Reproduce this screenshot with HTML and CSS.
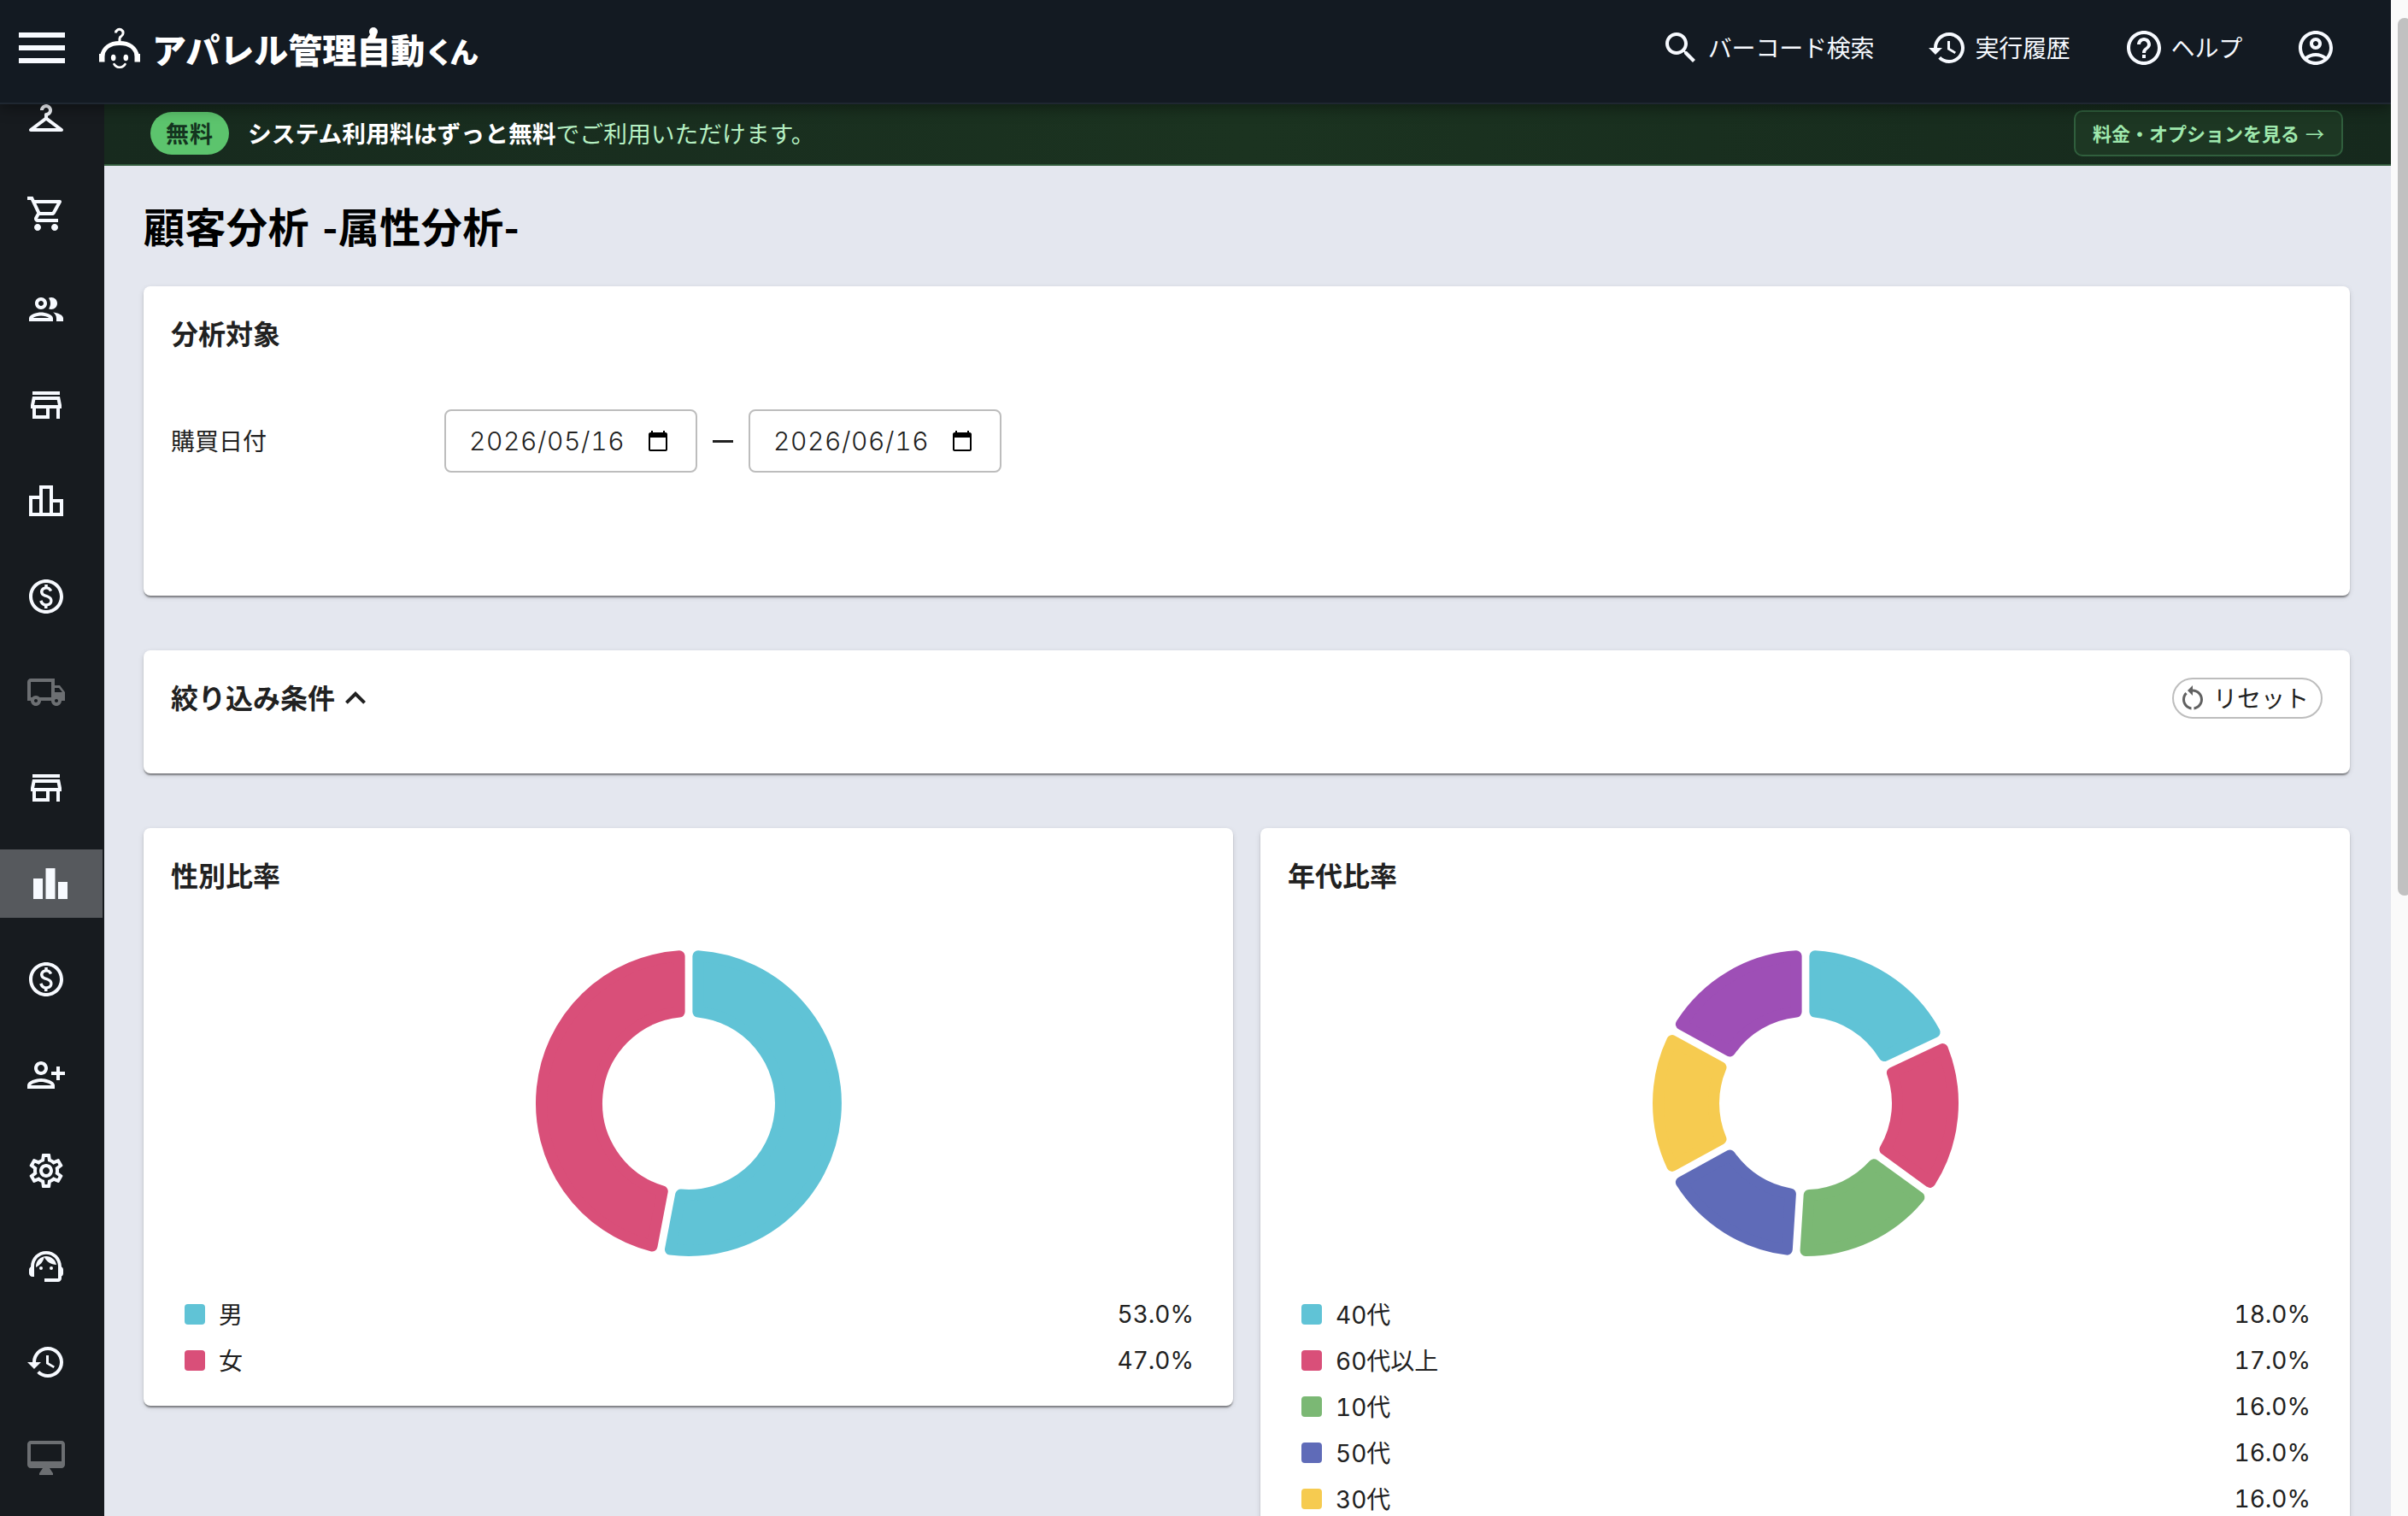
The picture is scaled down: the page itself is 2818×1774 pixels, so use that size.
FILE: index.html
```html
<!DOCTYPE html>
<html lang="ja">

<head>
    <meta charset="UTF-8">
    <title>顧客分析 -属性分析-</title>
    <link rel="stylesheet" href="styles.css">
</head>

<body>
    <div class="app">
        <!-- Header -->
        <header class="header">
            <svg class="menu-icon" viewBox="0 0 24 24"><path d="M3 18h18v-2H3v2zm0-5h18v-2H3v2zm0-7v2h18V6H3z"/></svg>
            <div class="logo">
                <svg class="logo-mark" viewBox="0 0 48 48">
                    <path d="M19.5 6.5a4.3 4.3 0 1 1 6.5 3.8c-1.6.8-2 1.5-2 3V18" fill="none" stroke="#fff" stroke-width="3"/>
                    <path d="M3.5 40v-6C5 24 13 18.5 24 18.5S43 24 44.5 34v6" fill="none" stroke="#fff" stroke-width="5"/>
                    <path d="M0 31h6.5v9.5H0zM41.5 31H48v9.5h-6.5z"/>
                    <ellipse cx="16.7" cy="35.5" rx="2.8" ry="3.8"/>
                    <ellipse cx="31.3" cy="35.5" rx="2.8" ry="3.8"/>
                    <path d="M17.5 43c3 5 10 5 13 0" fill="none" stroke="#fff" stroke-width="2.6" stroke-linecap="round"/>
                </svg>
                <span class="logo-text">アパレル管理自動<span class="logo-small">くん</span></span>
                <svg class="logo-antenna" viewBox="0 0 20 20"><circle cx="13" cy="6" r="5"/><path d="M10 8l4 3-4 7H3z"/></svg>
            </div>
            <nav class="header-nav">
                <a class="header-link">
                    <svg class="icon" viewBox="0 0 24 24"><path d="M15.5 14h-.79l-.28-.27C15.41 12.59 16 11.11 16 9.5 16 5.91 13.09 3 9.5 3S3 5.91 3 9.5 5.91 16 9.5 16c1.61 0 3.09-.59 4.23-1.57l.27.28v.79l5 4.99L20.49 19l-4.99-5zm-6 0C7.01 14 5 11.99 5 9.5S7.01 5 9.5 5 14 7.01 14 9.5 11.99 14 9.5 14z"/></svg>
                    <span>バーコード検索</span>
                </a>
                <a class="header-link">
                    <svg class="icon" viewBox="0 0 24 24"><use href="#i-history"/></svg>
                    <span>実行履歴</span>
                </a>
                <a class="header-link">
                    <svg class="icon" viewBox="0 0 24 24"><path d="M11 18h2v-2h-2v2zm1-16C6.48 2 2 6.48 2 12s4.48 10 10 10 10-4.48 10-10S17.52 2 12 2zm0 18c-4.41 0-8-3.59-8-8s3.59-8 8-8 8 3.59 8 8-3.59 8-8 8zm0-14c-2.21 0-4 1.79-4 4h2c0-1.1.9-2 2-2s2 .9 2 2c0 2-3 1.75-3 5h2c0-2.25 3-2.5 3-5 0-2.21-1.79-4-4-4z"/></svg>
                    <span>ヘルプ</span>
                </a>
                <a class="header-link">
                    <svg class="icon" viewBox="0 0 24 24"><path d="M12 2C6.48 2 2 6.48 2 12s4.48 10 10 10 10-4.48 10-10S17.52 2 12 2zM7.35 18.5C8.66 17.56 10.26 17 12 17s3.34.56 4.65 1.5C15.34 19.44 13.74 20 12 20s-3.34-.56-4.65-1.5zm10.79-1.38C16.45 15.8 14.32 15 12 15s-4.45.8-6.14 2.12C4.7 15.73 4 13.95 4 12c0-4.42 3.58-8 8-8s8 3.58 8 8c0 1.95-.7 3.73-1.86 5.12zM12 6c-1.93 0-3.5 1.57-3.5 3.5S10.07 13 12 13s3.5-1.57 3.5-3.5S13.93 6 12 6zm0 5c-.83 0-1.5-.67-1.5-1.5S11.17 8 12 8s1.5.67 1.5 1.5S12.83 11 12 11z"/></svg>
                </a>
            </nav>
        </header>

        <div class="body">
            <!-- Sidebar -->
            <aside class="sidebar">
                <div class="side-list">
                    <a class="side-item"><svg class="icon" viewBox="0 0 24 24"><path d="M21.6 18.2L13 11.75v-.91c1.65-.49 2.8-2.17 2.43-4.05-.26-1.31-1.3-2.4-2.61-2.7C10.54 3.57 8.5 5.3 8.5 7.5h2c0-.83.67-1.5 1.5-1.5s1.5.67 1.5 1.5c0 .84-.69 1.52-1.53 1.5-.54-.01-.97.45-.97.99v1.76L2.4 18.2c-.77.58-.36 1.8.6 1.8h18c.96 0 1.37-1.22.6-1.8zM6 18l6-4.5 6 4.5H6z"/></svg></a>
                    <a class="side-item"><svg class="icon" viewBox="0 0 24 24"><path d="M15.55 13c.75 0 1.41-.41 1.75-1.03l3.58-6.49c.37-.66-.11-1.48-.87-1.48H5.21l-.94-2H1v2h2l3.6 7.59-1.35 2.44C4.52 15.37 5.48 17 7 17h12v-2H7l1.1-2h7.45zM6.16 6h12.15l-2.76 5H8.53L6.16 6zM7 18c-1.1 0-1.99.9-1.99 2S5.9 22 7 22s2-.9 2-2-.9-2-2-2zm10 0c-1.1 0-1.99.9-1.99 2s.89 2 1.99 2 2-.9 2-2-.9-2-2-2z"/></svg></a>
                    <a class="side-item"><svg class="icon" viewBox="0 0 24 24"><path d="M9 13.75c-2.34 0-7 1.17-7 3.5V19h14v-1.75c0-2.33-4.66-3.5-7-3.5zM4.34 17c.84-.58 2.87-1.25 4.66-1.25s3.82.67 4.66 1.25H4.34zM9 12c1.93 0 3.5-1.57 3.5-3.5S10.93 5 9 5 5.5 6.57 5.5 8.5 7.07 12 9 12zm0-5c.83 0 1.5.67 1.5 1.5S9.83 10 9 10s-1.5-.67-1.5-1.5S8.17 7 9 7zm7.04 6.81c1.16.84 1.96 1.96 1.96 3.44V19h4v-1.75c0-2.02-3.5-3.17-5.96-3.44zM15 12c1.93 0 3.5-1.57 3.5-3.5S16.93 5 15 5c-.54 0-1.04.13-1.5.35.63.89 1 1.98 1 3.15s-.37 2.26-1 3.15c.46.22.96.35 1.5.35z"/></svg></a>
                    <a class="side-item"><svg class="icon" viewBox="0 0 24 24"><use href="#i-store"/></svg></a>
                    <a class="side-item"><svg class="icon" viewBox="0 0 24 24"><path d="M16 11V3H8v6H2v12h20V11h-6zm-6-6h4v14h-4V5zm-6 6h4v8H4v-8zm16 8h-4v-6h4v6z"/></svg></a>
                    <a class="side-item"><svg class="icon" viewBox="0 0 24 24"><use href="#i-paid"/></svg></a>
                    <a class="side-item disabled"><svg class="icon" viewBox="0 0 24 24"><path d="M20 8h-3V4H3c-1.1 0-2 .9-2 2v11h2c0 1.66 1.34 3 3 3s3-1.34 3-3h6c0 1.66 1.34 3 3 3s3-1.34 3-3h2v-5l-3-4zm-.5 1.5l1.96 2.5H17V9.5h2.5zM6 18c-.55 0-1-.45-1-1s.45-1 1-1 1 .45 1 1-.45 1-1 1zm2.22-3c-.55-.61-1.33-1-2.22-1s-1.67.39-2.22 1H3V6h12v9H8.22zM18 18c-.55 0-1-.45-1-1s.45-1 1-1 1 .45 1 1-.45 1-1 1z"/></svg></a>
                    <a class="side-item"><svg class="icon" viewBox="0 0 24 24"><use href="#i-store"/></svg></a>
                    <a class="side-item active"><svg class="icon" viewBox="0 0 24 24"><path d="M7.5 21H2V9h5.5v12zm7.25-18h-5.5v18h5.5V3zM22 11h-5.5v10H22V11z"/></svg></a>
                    <a class="side-item"><svg class="icon" viewBox="0 0 24 24"><use href="#i-paid"/></svg></a>
                    <a class="side-item"><svg class="icon" viewBox="0 0 24 24"><path d="M13 8c0-2.21-1.79-4-4-4S5 5.79 5 8s1.79 4 4 4 4-1.79 4-4zm-2 0c0 1.1-.9 2-2 2s-2-.9-2-2 .9-2 2-2 2 .9 2 2zM1 18v2h16v-2c0-2.66-5.33-4-8-4s-8 1.34-8 4zm2 0c.2-.71 3.3-2 6-2 2.69 0 5.78 1.28 6 2H3zM20 15v-3h3v-2h-3V7h-2v3h-3v2h3v3h2z"/></svg></a>
                    <a class="side-item"><svg class="icon" viewBox="0 0 24 24"><path d="M19.43 12.98c.04-.32.07-.64.07-.98 0-.34-.03-.66-.07-.98l2.11-1.65c.19-.15.24-.42.12-.64l-2-3.46c-.09-.16-.26-.25-.44-.25-.06 0-.12.01-.17.03l-2.49 1c-.52-.4-1.08-.73-1.69-.98l-.38-2.65C14.46 2.18 14.25 2 14 2h-4c-.25 0-.46.18-.49.42l-.38 2.65c-.61.25-1.17.59-1.69.98l-2.49-1c-.06-.02-.12-.03-.18-.03-.17 0-.34.09-.43.25l-2 3.46c-.13.22-.07.49.12.64l2.11 1.65c-.04.32-.07.65-.07.98 0 .33.03.66.07.98l-2.11 1.65c-.19.15-.24.42-.12.64l2 3.46c.09.16.26.25.44.25.06 0 .12-.01.17-.03l2.49-1c.52.4 1.08.73 1.69.98l.38 2.65c.03.24.24.42.49.42h4c.25 0 .46-.18.49-.42l.38-2.65c.61-.25 1.17-.59 1.69-.98l2.49 1c.06.02.12.03.18.03.17 0 .34-.09.43-.25l2-3.46c.12-.22.07-.49-.12-.64l-2.11-1.65zm-1.98-1.71c.04.31.05.52.05.73 0 .21-.02.43-.05.73l-.14 1.13.89.7 1.08.84-.7 1.21-1.27-.51-1.04-.42-.9.68c-.43.32-.84.56-1.25.73l-1.06.43-.16 1.13-.2 1.35h-1.4l-.19-1.35-.16-1.13-1.06-.43c-.43-.18-.83-.41-1.23-.71l-.91-.7-1.06.43-1.27.51-.7-1.21 1.08-.84.89-.7-.14-1.13c-.03-.31-.05-.54-.05-.74s.02-.43.05-.73l.14-1.13-.89-.7-1.08-.84.7-1.21 1.27.51 1.04.42.9-.68c.43-.32.84-.56 1.25-.73l1.06-.43.16-1.13.2-1.35h1.39l.19 1.35.16 1.13 1.06.43c.43.18.83.41 1.23.71l.91.7 1.06-.43 1.27-.51.7 1.21-1.07.85-.89.7.14 1.13zM12 8c-2.21 0-4 1.79-4 4s1.79 4 4 4 4-1.79 4-4-1.79-4-4-4zm0 6c-1.1 0-2-.9-2-2s.9-2 2-2 2 .9 2 2-.9 2-2 2z"/></svg></a>
                    <a class="side-item"><svg class="icon" viewBox="0 0 24 24"><path d="M21 12.22C21 6.73 16.74 3 12 3c-4.69 0-9 3.65-9 9.28-.6.34-1 .98-1 1.72v2c0 1.1.9 2 2 2h1v-6.1c0-3.87 3.13-7 7-7s7 3.13 7 7V19h-8v2h8c1.1 0 2-.9 2-2v-1.22c.59-.31 1-.92 1-1.64v-2.3c0-.7-.41-1.31-1-1.62z"/><circle cx="9" cy="13" r="1"/><circle cx="15" cy="13" r="1"/><path d="M18 11.03C17.52 8.18 15.04 6 12.05 6c-3.03 0-6.29 2.51-6.03 6.45 2.47-1.01 4.33-3.21 4.86-5.89 1.31 2.63 4 4.44 7.12 4.47z"/></svg></a>
                    <a class="side-item"><svg class="icon" viewBox="0 0 24 24"><use href="#i-history"/></svg></a>
                    <a class="side-item disabled"><svg class="icon" viewBox="0 0 24 24"><path d="M21 2H3c-1.1 0-2 .9-2 2v12c0 1.1.9 2 2 2h7l-2 3v1h8v-1l-2-3h7c1.1 0 2-.9 2-2V4c0-1.1-.9-2-2-2zm0 12H3V4h18v10z"/></svg></a>
                </div>
            </aside>

            <!-- Main -->
            <main class="main">
                <div class="banner">
                    <span class="banner-badge">無料</span>
                    <p class="banner-text"><strong>システム利用料はずっと無料</strong>でご利用いただけます。</p>
                    <a class="banner-link">料金・オプションを見る <span class="arrow">→</span></a>
                </div>

                <div class="content">
                    <h1>顧客分析 -属性分析-</h1>

                    <section class="card target-card">
                        <h2>分析対象</h2>
                        <div class="date-row">
                            <span class="date-label">購買日付</span>
                            <div class="date-field">
                                <span>2026/05/16</span>
                                <svg class="calendar" viewBox="0 0 24 26"><use href="#i-calendar"/></svg>
                            </div>
                            <span class="date-dash"></span>
                            <div class="date-field">
                                <span>2026/06/16</span>
                                <svg class="calendar" viewBox="0 0 24 26"><use href="#i-calendar"/></svg>
                            </div>
                        </div>
                    </section>

                    <section class="card filter-card">
                        <h2>絞り込み条件<svg class="chevron" viewBox="0 0 24 24"><path d="M7.41 15.41L12 10.83l4.59 4.58L18 14l-6-6-6 6z"/></svg></h2>
                        <button class="reset-btn">
                            <svg class="reset-icon" viewBox="0 0 24 24"><path d="M12 5V2L8 6l4 4V7c3.31 0 6 2.69 6 6 0 2.97-2.17 5.43-5 5.91v2.02c3.95-.49 7-3.85 7-7.93 0-4.42-3.58-8-8-8zm-6 8c0-1.65.67-3.15 1.76-4.24L6.34 7.34C4.9 8.79 4 10.79 4 13c0 4.08 3.05 7.44 7 7.93v-2.02c-2.83-.48-5-2.94-5-5.91z"/></svg>
                            <span>リセット</span>
                        </button>
                    </section>

                    <div class="charts">
                        <section class="card chart-card">
                            <h2>性別比率</h2>
                            <svg class="donut" id="gender-chart" viewBox="-180 -180 360 360"></svg>
                            <ul class="legend">
                                <li><span class="swatch cyan"></span><span class="name">男</span><span class="value">53.0%</span></li>
                                <li><span class="swatch pink"></span><span class="name">女</span><span class="value">47.0%</span></li>
                            </ul>
                        </section>
                        <section class="card chart-card">
                            <h2>年代比率</h2>
                            <svg class="donut" id="age-chart" viewBox="-180 -180 360 360"></svg>
                            <ul class="legend">
                                <li><span class="swatch cyan"></span><span class="name">40代</span><span class="value">18.0%</span></li>
                                <li><span class="swatch pink"></span><span class="name">60代以上</span><span class="value">17.0%</span></li>
                                <li><span class="swatch green"></span><span class="name">10代</span><span class="value">16.0%</span></li>
                                <li><span class="swatch blue"></span><span class="name">50代</span><span class="value">16.0%</span></li>
                                <li><span class="swatch yellow"></span><span class="name">30代</span><span class="value">16.0%</span></li>
                            </ul>
                        </section>
                    </div>
                </div>
            </main>
        </div>

        <div class="scrollbar"><div class="scrollbar-thumb"></div></div>
    </div>

    <!-- Shared icons -->
    <svg class="defs">
        <defs>
            <path id="i-history" d="M13 3c-4.97 0-9 4.03-9 9H1l3.89 3.89.07.14L9 12H6c0-3.87 3.13-7 7-7s7 3.13 7 7-3.13 7-7 7c-1.93 0-3.68-.79-4.94-2.06l-1.42 1.42C8.27 19.99 10.51 21 13 21c4.97 0 9-4.03 9-9s-4.03-9-9-9zm-1 5v5l4.28 2.54.72-1.21-3.5-2.08V8H12z"/>
            <path id="i-store" d="M18.36 9l.6 3H5.04l.6-3h12.72M20 4H4v2h16V4zm0 3H4l-1 5v2h1v6h10v-6h4v6h2v-6h1v-2l-1-5zM6 18v-4h6v4H6z"/>
            <path id="i-paid" d="M12 2C6.48 2 2 6.48 2 12s4.48 10 10 10 10-4.48 10-10S17.52 2 12 2zm0 18c-4.41 0-8-3.59-8-8s3.59-8 8-8 8 3.59 8 8-3.59 8-8 8zm.89-8.9c-1.78-.59-2.64-.96-2.64-1.9 0-1.02 1.11-1.39 1.81-1.39 1.31 0 1.79.99 1.9 1.34l1.58-.67c-.15-.44-.82-1.91-2.66-2.23V5h-1.75v1.26c-2.6.56-2.62 2.85-2.62 2.96 0 2.27 2.25 2.91 3.35 3.31 1.58.56 2.28 1.07 2.28 2.03 0 1.13-1.05 1.61-1.98 1.61-1.82 0-2.34-1.87-2.4-2.09l-1.66.67c.63 2.19 2.28 2.78 2.9 2.96V19h1.75v-1.24c.52-.09 3.02-.59 3.02-3.22.01-1.39-.6-2.61-3.02-3.44z"/>
            <path id="i-calendar" d="M4 1h2v2h12V1h2v2h1c1 0 2 1 2 2v18c0 1-1 2-2 2H3c-1 0-2-1-2-2V5c0-1 1-2 2-2h1V1zM3 9v14h18V9H3z" fill-rule="evenodd"/>
        </defs>
    </svg>

    <script>
        const genderData = [
            { value: 53, color: '#60c3d6' },
            { value: 47, color: '#d94f79' }
        ];
        const ageData = [
            { value: 18, color: '#60c3d6' },
            { value: 17, color: '#d94f79' },
            { value: 16, color: '#7bb874' },
            { value: 16, color: '#5f6bb8' },
            { value: 16, color: '#f6cb50' },
            { value: 17, color: '#9e4fb6' }
        ];

        // The path is inset by the corner radius, the round stroke fills it back out
        function drawDonut(id, data) {
            const corner = 6.5;
            const outer = 179 - corner;
            const inner = 101 + corner;
            const offset = 4.4 + corner;
            const point = (r, a) => `${(r * Math.sin(a)).toFixed(2)} ${(-r * Math.cos(a)).toFixed(2)}`;
            let start = 0;
            let html = '';
            for (const item of data) {
                const end = start + item.value / 100 * Math.PI * 2;
                const o = Math.asin(offset / outer);
                const i = Math.asin(offset / inner);
                const largeOuter = end - start - 2 * o > Math.PI ? 1 : 0;
                const largeInner = end - start - 2 * i > Math.PI ? 1 : 0;
                html += `<path fill="${item.color}" stroke="${item.color}" stroke-width="${corner * 2}" stroke-linejoin="round" d="M${point(outer, start + o)} A${outer} ${outer} 0 ${largeOuter} 1 ${point(outer, end - o)} L${point(inner, end - i)} A${inner} ${inner} 0 ${largeInner} 0 ${point(inner, start + i)} Z"/>`;
                start = end;
            }
            document.getElementById(id).innerHTML = html;
        }

        drawDonut('gender-chart', genderData);
        drawDonut('age-chart', ageData);
    </script>
</body>

</html>
```
FILE: styles.css
```css
* {
    box-sizing: border-box;
}

body {
    margin: 0;
    font-family: 'Noto Sans CJK JP', sans-serif;
    font-size: 28px;
    color: #212121;
    background: #fafafa;
}

h1,
h2,
p,
ul {
    margin: 0;
    padding: 0;
}

.app {
    position: relative;
    width: 100%;
    height: 1774px;
    padding-right: 20px;
    overflow: hidden;
}

.defs {
    display: none;
}

.icon {
    width: 48px;
    height: 48px;
    fill: currentColor;
    flex-shrink: 0;
}

/* Header */
.header {
    position: relative;
    z-index: 2;
    display: flex;
    align-items: center;
    height: 122px;
    padding: 0 64px 8px 13px;
    background: #131a22;
    border-bottom: 2px solid #1f2731;
    color: #f7faff;
    box-shadow: 0 4px 16px rgba(0, 0, 0, 0.4);
}

.menu-icon {
    width: 72px;
    height: 72px;
    fill: #f7faff;
}

.logo {
    position: relative;
    display: flex;
    align-items: center;
    gap: 14px;
    margin-left: 31px;
    fill: #fff;
}

.logo-mark {
    width: 48px;
    height: 48px;
}

.logo-text {
    font-size: 40px;
    font-weight: 900;
    line-height: 48px;
    color: #fff;
    padding-top: 4px;
}

.logo-small {
    font-size: 34px;
    letter-spacing: -5px;
}

.logo-antenna {
    position: absolute;
    left: 308px;
    top: 2px;
    width: 20px;
    height: 20px;
}

.header-nav {
    display: flex;
    gap: 62px;
    margin-left: auto;
}

.header-link {
    display: flex;
    align-items: center;
    gap: 8px;
}

.header-link span {
    padding-bottom: 2px;
    line-height: 46px;
    letter-spacing: -0.2px;
}

.body {
    display: flex;
    height: 1652px;
}

/* Sidebar */
.sidebar {
    width: 122px;
    overflow: hidden;
    background: #171b1f;
    flex-shrink: 0;
}

.side-list {
    display: flex;
    flex-direction: column;
    gap: 32px;
    margin-top: -24px;
}

.side-item {
    display: flex;
    align-items: center;
    width: 120px;
    height: 80px;
    padding-left: 30px;
    color: #f7faff;
}

.side-item.active {
    padding-left: 35px;
    background: #56595d;
}

.side-item.disabled {
    color: #6c6f72;
}

/* Main */
.main {
    flex: 1;
    background: #e4e7ef;
}

.banner {
    display: flex;
    align-items: center;
    height: 72px;
    padding: 0 56px 2px 54px;
    background: linear-gradient(90deg, #172a1e, #1b3320 50%, #16291d);
    border-bottom: 2px solid #315b3b;
}

.banner-badge {
    width: 92px;
    height: 50px;
    border-radius: 25px;
    background: #5cc46d;
    color: #14351f;
    font-size: 27px;
    font-weight: 700;
    letter-spacing: 1px;
    line-height: 49px;
    text-align: center;
}

.banner-text {
    margin-left: 22px;
    padding-bottom: 2px;
    font-size: 27.8px;
    line-height: 48px;
    color: #b5efc2;
}

.banner-text strong {
    color: #fff;
}

.banner-link {
    display: flex;
    justify-content: space-between;
    width: 315px;
    height: 54px;
    margin-left: auto;
    padding: 0 20px;
    border: 2px solid #305f3d;
    border-radius: 10px;
    background: #1d3723;
    color: #9fe8ad;
    font-size: 22px;
    font-weight: 700;
    line-height: 48px;
}

.arrow {
    font-weight: 400;
}

.content {
    padding: 36px 48px 0 46px;
}

h1 {
    margin-bottom: 39px;
    font-size: 48px;
    line-height: 66px;
    letter-spacing: 0.5px;
    word-spacing: 4px;
    color: #000;
}

h2 {
    display: flex;
    align-items: center;
    height: 48px;
    padding-bottom: 3px;
    font-size: 32px;
    line-height: 45px;
}

.card {
    padding: 32px;
    border-radius: 8px;
    background: #fff;
    box-shadow: 0 3px 2px -1px rgba(0, 0, 0, 0.32), 0 2px 2px rgba(0, 0, 0, 0.14), 0 2px 6px rgba(0, 0, 0, 0.12);
}

.target-card {
    height: 362px;
    margin-bottom: 64px;
}

.date-row {
    display: flex;
    align-items: center;
    margin-top: 64px;
}

.date-label {
    width: 320px;
    padding-bottom: 2px;
}

.date-field {
    display: flex;
    align-items: center;
    justify-content: space-between;
    width: 296px;
    height: 74px;
    padding: 0 32px 0 27px;
    border: 2px solid #bdbdbd;
    border-radius: 8px;
    font-family: 'Inter', sans-serif;
    font-size: 30px;
    font-weight: 300;
    font-variant-numeric: tabular-nums;
    letter-spacing: 0.6px;
}

.calendar {
    width: 24px;
    height: 26px;
    fill: #000;
}

.date-dash {
    width: 24px;
    height: 3px;
    margin: 0 18px;
    background: #212121;
}

.filter-card {
    display: flex;
    align-items: flex-start;
    justify-content: space-between;
    height: 144px;
    margin-bottom: 64px;
}

.chevron {
    width: 48px;
    height: 48px;
    margin-top: 2px;
    fill: #212121;
}

.reset-btn {
    display: flex;
    align-items: center;
    gap: 6px;
    width: 176px;
    height: 48px;
    padding: 0 0 0 4px;
    border: 2px solid #bdbdbd;
    border-radius: 24px;
    background: #fff;
    color: #212121;
    font-family: inherit;
    font-size: 28px;
}

.reset-btn span {
    padding-bottom: 2px;
    line-height: 42px;
}

.reset-icon {
    width: 36px;
    height: 36px;
    fill: #616161;
}

/* Charts */
.charts {
    display: grid;
    grid-template-columns: 1fr 1fr;
    gap: 32px;
    align-items: start;
}

.chart-card {
    padding-bottom: 26px;
}

.donut {
    display: block;
    width: 360px;
    height: 360px;
    margin: 62px auto 40px;
}

.legend {
    padding: 0 14px 0 16px;
    list-style: none;
    font-family: 'Inter', 'Noto Sans CJK JP', sans-serif;
    font-size: 28px;
    font-variant-numeric: tabular-nums;
}

.legend li {
    display: flex;
    align-items: center;
    height: 54px;
}

.swatch {
    width: 24px;
    height: 24px;
    margin-right: 16px;
    border-radius: 4px;
}

.name {
    padding-bottom: 2px;
}

.value {
    margin-left: auto;
}

.cyan {
    background: #60c3d6;
}

.pink {
    background: #d94f79;
}

.green {
    background: #7bb874;
}

.blue {
    background: #5f6bb8;
}

.yellow {
    background: #f6cb50;
}

/* Window scrollbar, lies over the right edge */
.scrollbar {
    position: absolute;
    top: 0;
    right: 0;
    width: 20px;
    height: 100%;
    padding: 21px 0 0 8px;
    overflow: hidden;
    background: #fafafa;
    z-index: 3;
}

.scrollbar-thumb {
    width: 16px;
    height: 1027px;
    border-radius: 8px;
    background: #c1c1c1;
}
```
